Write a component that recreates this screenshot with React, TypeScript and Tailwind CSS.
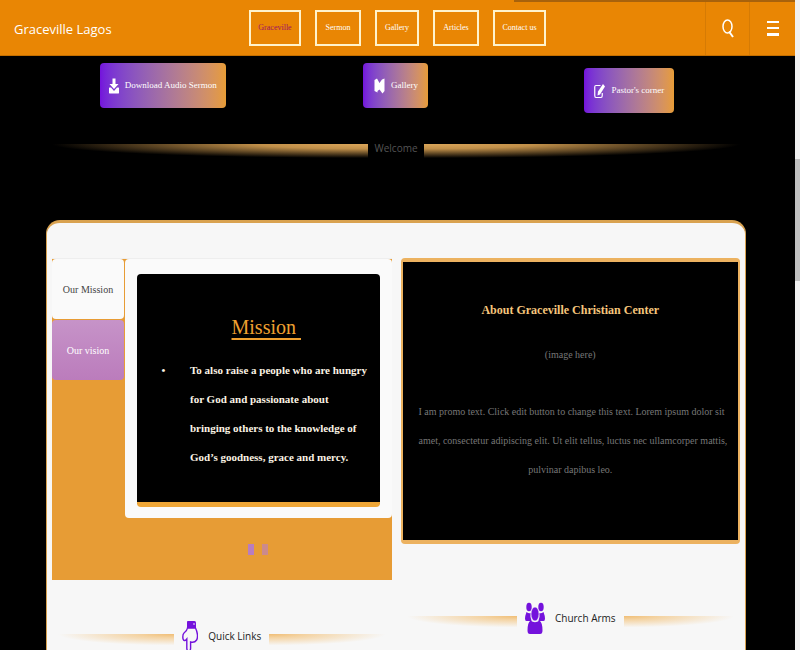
import type { ReactNode } from "react";

const serif = "font-['Liberation_Serif','Times_New_Roman',serif]";
const sans = "font-['Open_Sans','Noto_Sans',sans-serif]";

function DownloadIcon() {
  return (
    <svg aria-hidden="true" className="h-4 w-[10px] shrink-0" viewBox="0 0 20 32" preserveAspectRatio="none" fill="currentColor">
      <path d="M7 1h6v11h6L10 22 1 12h6zM1 19h3l6 7 6-7h3q1 0 1 1.500v9q0 1.500-1 1.500H1q-1 0-1-1.500v-9Q0 19 1 19z" />
    </svg>
  );
}

function GalleryIcon() {
  return (
    <svg aria-hidden="true" className="h-4 w-[11px] shrink-0" viewBox="0 0 22 32" preserveAspectRatio="none" fill="currentColor">
      <path d="M1 4l5-3 5 9 5-7 5-2v25l-4 5-6-8-4 3v3l-6-3z" />
    </svg>
  );
}

function EditIcon() {
  return (
    <svg aria-hidden="true" className="h-4 w-[11px] shrink-0" viewBox="0 0 22 32" preserveAspectRatio="none">
      <path d="M13 5H4Q1.500 5 1.500 8v17q0 4 2.500 4h10q2.500 0 2.500-4v-5" fill="none" stroke="currentColor" strokeWidth="2.400" />
      <path d="M18 2l4 5-10 16-5 2 1-8z" fill="currentColor" />
    </svg>
  );
}

function HandDownIcon() {
  return (
    <svg aria-hidden="true" className="h-8 w-4 shrink-0 text-[#7412dc]" viewBox="0 0 16 32" preserveAspectRatio="none">
      <path d="M5.500 1h7q1.500 0 1.500 1.500V8H5V2.500Q5 1 5.500 1z" fill="currentColor" />
      <circle cx="12" cy="4" r="0.800" fill="#fff" />
      <path d="M5.500 8Q5 11 2 13 .8 14 .8 17q0 3 1.500 3.500 1 .4 2.500-1.500v9q0 3 1.900 3t1.900-3v-6q4 1 6-2 1-1.500.9-5Q15 11 13.500 8z" fill="none" stroke="currentColor" strokeWidth="1.400" />
    </svg>
  );
}

function PeopleIcon() {
  return (
    <svg aria-hidden="true" className="h-8 w-5 shrink-0 text-[#7412dc]" viewBox="0 0 20 32" preserveAspectRatio="none" fill="currentColor">
      <ellipse cx="4" cy="5" rx="2.700" ry="4.300" />
      <ellipse cx="16" cy="5" rx="2.700" ry="4.300" />
      <path d="M1.500 10Q4 12 5.800 11q-1 4 .8 8H1.500Q0 19 0 16.500T1.500 10zM18.500 10Q16 12 14.200 11q1 4-.8 8h5.100Q20 19 20 16.500T18.500 10z" />
      <ellipse cx="10" cy="12" rx="4" ry="7" stroke="#f7f7f7" strokeWidth="0.600" />
      <path d="M5.500 18.500q4.500 3.500 9 0 3 2 3 10 0 3.500-2.500 3.500H5q-2.500 0-2.500-3.500 0-8 3-10z" />
    </svg>
  );
}

const navItems = [
  { label: "Graceville", width: "w-[52px]", color: "text-[#a01460]" },
  { label: "Sermon", width: "w-[46px]", color: "text-white" },
  { label: "Gallery", width: "w-[44px]", color: "text-white" },
  { label: "Articles", width: "w-[46px]", color: "text-white" },
  { label: "Contact us", width: "w-[53px]", color: "text-white" },
];

function Header() {
  return (
    <header className="grid h-14 grid-cols-[1fr_auto_1fr] items-center border-b border-[#c46f00] bg-[#e98604] bg-[linear-gradient(#a8620c,#a8620c)] bg-size-[281px_2px] bg-right-top bg-no-repeat">
      <div className="pl-[14px]">
        <a href="#home" className={`${sans} text-[13px] whitespace-nowrap text-white`}>Graceville Lagos</a>
      </div>
      <nav className={`${serif} flex gap-[14px] text-[8px]`}>
        {navItems.map((item) => (
          <a
            key={item.label}
            href="#nav"
            className={`flex h-9 items-center justify-center border-2 border-[#fff3cc] whitespace-nowrap ${item.width} ${item.color}`}
          >
            {item.label}
          </a>
        ))}
      </nav>
      <div className="flex h-full justify-end pt-[2px] text-white">
        <button aria-label="Search" className="flex w-11 items-center justify-center border-l border-[#d67b04]">
          <svg aria-hidden="true" className="h-5 w-3" viewBox="0 0 12 20" fill="none" stroke="currentColor">
            <ellipse cx="5.500" cy="7.500" rx="4.500" ry="6.500" strokeWidth="1.500" />
            <path d="M7 12.500l4 5.500" strokeWidth="2" />
          </svg>
        </button>
        <button aria-label="Menu" className="flex w-[46px] items-center justify-center border-l border-[#d67b04]">
          <svg aria-hidden="true" className="h-4 w-3" viewBox="0 0 12 16" fill="currentColor">
            <path d="M0 0h12v2H0zM0 6h12v2H0zM0 12h12v3H0z" />
          </svg>
        </button>
      </div>
    </header>
  );
}

function ActionButton({ icon, children, size }: { icon: ReactNode; children: ReactNode; size: string }) {
  return (
    <button
      className={`${serif} ${size} flex h-[45px] items-center justify-center gap-[6px] rounded-[4px] bg-linear-to-r from-[#7412dc] to-[#e79c35] text-[9px] whitespace-nowrap text-white`}
    >
      {icon}
      {children}
    </button>
  );
}

function SectionDivider({ icon, children }: { icon: ReactNode; children: ReactNode }) {
  return (
    <div className="flex h-8 items-center">
      <span className="mt-2 h-3 flex-1 bg-[radial-gradient(ellipse_100%_100%_at_100%_0,#f0bd74_0%,#f4d3a2_30%,#f7f7f7_95%)]" />
      <h2 className={`${sans} flex items-center gap-[10px] px-2 text-[10px] whitespace-nowrap text-[#222222]`}>
        {icon}
        {children}
      </h2>
      <span className="mt-2 h-3 flex-1 bg-[radial-gradient(ellipse_100%_100%_at_0_0,#f0bd74_0%,#f4d3a2_30%,#f7f7f7_95%)]" />
    </div>
  );
}

function MissionTabs() {
  return (
    <section className={`${serif} flex h-[322px] border-t border-[#eeeeee] bg-[#e79c35]`}>
      <div role="tablist" aria-label="Mission and vision" className="flex w-[73px] shrink-0 flex-col gap-px pr-px text-[10px]">
        <button role="tab" aria-selected="true" className="h-[60px] rounded-[4px] bg-[#fafafa] text-[#444444]">
          Our Mission
        </button>
        <button role="tab" aria-selected="false" className="h-[60px] rounded-[4px] bg-linear-to-b from-[#c693c8] to-[#bb7cbc] text-white">
          Our vision
        </button>
      </div>
      <div className="flex flex-1 flex-col">
        <div role="tabpanel" className="h-[259px] rounded-[4px] bg-[#fafafa] px-3 pt-[15px] pb-[11px]">
          <div className="h-full rounded-[4px] border-b-[5px] border-[#efa636] bg-black pt-9">
            <h2 className="pl-4 text-center text-[20px] leading-[34px] text-[#efa030] underline decoration-2 underline-offset-4">
              Mission&nbsp;
            </h2>
            <ul className="mt-3 list-none text-[11px] leading-[29px] font-bold text-[#fbf3e4]">
              <li className="flex">
                <span className="w-[53px] shrink-0 text-center">•</span>
                <span className="whitespace-nowrap">
                  To also raise a people who are hungry
                  <br />
                  for God and passionate about
                  <br />
                  bringing others to the knowledge of
                  <br />
                  God’s goodness, grace and mercy.
                </span>
              </li>
            </ul>
          </div>
        </div>
        <div className="flex flex-1 items-center justify-center gap-2">
          <button aria-label="Slide 1" className="h-[11px] w-[6px] bg-[#b87dc0]" />
          <button aria-label="Slide 2" className="h-[11px] w-[6px] bg-[#cb8a8c]" />
        </div>
      </div>
    </section>
  );
}

function AboutPanel() {
  return (
    <section className={`${serif} h-[286px] rounded-[4px] border-x-2 border-y-4 border-[#ecb260] bg-black px-4 pt-8 text-center`}>
      <h2 className="text-[12px] leading-[32px] font-bold text-[#f6c67c]">About Graceville Christian Center</h2>
      <div className="mt-[14px] text-[10px] leading-[29px] text-[#777777]">
        <p>(image here)</p>
        <p className="mt-7 whitespace-nowrap">
          I am promo text. Click edit button to change this text. Lorem ipsum dolor sit
          <br />
          amet, consectetur adipiscing elit. Ut elit tellus, luctus nec ullamcorper mattis,
          <br />
          pulvinar dapibus leo.
        </p>
      </div>
    </section>
  );
}

export default function App() {
  return (
    <div className="flex h-screen overflow-hidden bg-black">
      <div className="min-w-0 flex-1">
        <Header />
        <main className="pr-[49px] pl-[46px]">
          <div className="grid grid-cols-3 items-start pt-[7px]">
            <div className="flex justify-center">
              <ActionButton size="w-[126px]" icon={<DownloadIcon />}>Download Audio Sermon</ActionButton>
            </div>
            <div className="flex justify-center">
              <ActionButton size="w-[65px]" icon={<GalleryIcon />}>Gallery</ActionButton>
            </div>
            <div className="flex justify-center pt-[5px]">
              <ActionButton size="w-[90px]" icon={<EditIcon />}>Pastor's corner</ActionButton>
            </div>
          </div>

          <div className="mt-[26px] flex h-[18px] items-center px-[6px]">
            <span className="mt-[6px] h-[14px] flex-1 bg-[radial-gradient(ellipse_100%_100%_at_100%_0,#dba65a_0%,#c08f49_35%,#000_100%)]" />
            <h2 className={`${sans} px-[6px] text-[10px] text-[#555555]`}>Welcome</h2>
            <span className="mt-[6px] h-[14px] flex-1 bg-[radial-gradient(ellipse_100%_100%_at_0_0,#dba65a_0%,#c08f49_35%,#000_100%)]" />
          </div>

          <div className="mt-[63px] grid h-[500px] grid-cols-2 gap-[9px] rounded-t-[14px] border-x border-t-[3px] border-[#d9a250] bg-[#f7f7f7] px-[5px] pt-[35px]">
            <div>
              <MissionTabs />
              <div className="mt-10">
                <SectionDivider icon={<HandDownIcon />}>Quick Links</SectionDivider>
              </div>
            </div>
            <div>
              <AboutPanel />
              <div className="mt-[58px]">
                <SectionDivider icon={<PeopleIcon />}>Church Arms</SectionDivider>
              </div>
            </div>
          </div>
        </main>
      </div>
      <div aria-hidden="true" className="flex w-[5px] flex-col bg-[#f1f1f1] pt-[159px]">
        <div className="h-[122px] bg-[#c1c1c1]" />
      </div>
    </div>
  );
}
